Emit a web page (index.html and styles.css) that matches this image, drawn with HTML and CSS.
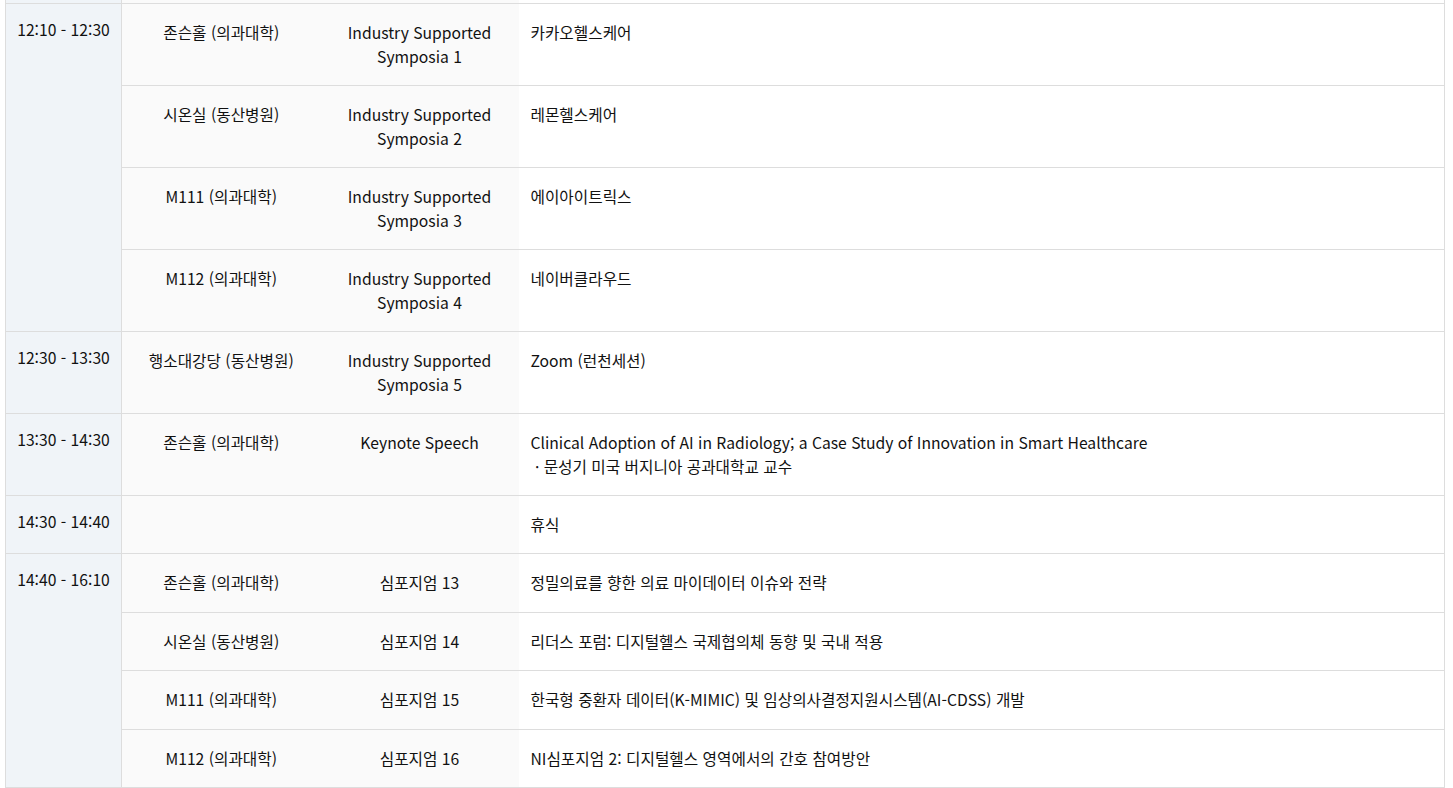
FILE: index.html
```html
<!DOCTYPE html>
<html lang="ko">
<head>
<meta charset="utf-8">
<link rel="stylesheet" href="styles.css">
</head>
<body>
<div class="wrap">
<table class="sched">
  <colgroup>
    <col class="c-time"><col class="c-room"><col class="c-sess"><col class="c-desc">
  </colgroup>
  <tbody>
    <tr class="filler"><td class="time"></td><td class="room"></td><td class="sess"></td><td class="desc"></td></tr>
    <tr>
      <td class="time" rowspan="4">12:10 - 12:30</td>
      <td class="room">존슨홀 (의과대학)</td>
      <td class="sess">Industry Supported<br>Symposia 1</td>
      <td class="desc">카카오헬스케어</td>
    </tr>
    <tr>
      <td class="room">시온실 (동산병원)</td>
      <td class="sess">Industry Supported<br>Symposia 2</td>
      <td class="desc">레몬헬스케어</td>
    </tr>
    <tr>
      <td class="room">M111 (의과대학)</td>
      <td class="sess">Industry Supported<br>Symposia 3</td>
      <td class="desc">에이아이트릭스</td>
    </tr>
    <tr>
      <td class="room">M112 (의과대학)</td>
      <td class="sess">Industry Supported<br>Symposia 4</td>
      <td class="desc">네이버클라우드</td>
    </tr>
    <tr>
      <td class="time">12:30 - 13:30</td>
      <td class="room">행소대강당 (동산병원)</td>
      <td class="sess">Industry Supported<br>Symposia 5</td>
      <td class="desc">Zoom (런천세션)</td>
    </tr>
    <tr>
      <td class="time">13:30 - 14:30</td>
      <td class="room">존슨홀 (의과대학)</td>
      <td class="sess">Keynote Speech</td>
      <td class="desc">Clinical Adoption of AI in Radiology; a Case Study of Innovation in Smart Healthcare<br>&nbsp;· 문성기 미국 버지니아 공과대학교 교수</td>
    </tr>
    <tr>
      <td class="time">14:30 - 14:40</td>
      <td class="room"></td>
      <td class="sess"></td>
      <td class="desc">휴식</td>
    </tr>
    <tr class="loose">
      <td class="time" rowspan="4">14:40 - 16:10</td>
      <td class="room">존슨홀 (의과대학)</td>
      <td class="sess">심포지엄 13</td>
      <td class="desc">정밀의료를 향한 의료 마이데이터 이슈와 전략</td>
    </tr>
    <tr class="loose">
      <td class="room">시온실 (동산병원)</td>
      <td class="sess">심포지엄 14</td>
      <td class="desc">리더스 포럼: 디지털헬스 국제협의체 동향 및 국내 적용</td>
    </tr>
    <tr class="loose">
      <td class="room">M111 (의과대학)</td>
      <td class="sess">심포지엄 15</td>
      <td class="desc">한국형 중환자 데이터(K-MIMIC) 및 임상의사결정지원시스템(AI-CDSS) 개발</td>
    </tr>
    <tr class="loose">
      <td class="room">M112 (의과대학)</td>
      <td class="sess">심포지엄 16</td>
      <td class="desc">NI심포지엄 2: 디지털헬스 영역에서의 간호 참여방안</td>
    </tr>
  </tbody>
</table>
</div>
</body>
</html>
```

FILE: styles.css
```css
html, body {
  margin: 0;
  padding: 0;
  background: #fff;
}
body {
  font-family: "Noto Sans CJK KR", "Noto Sans", sans-serif;
  font-size: 15.7px;
  color: #111;
}
.wrap {
  padding-left: 5px;
  width: 1440px;
}
.sched {
  width: 1440px;
  border-collapse: collapse;
  table-layout: fixed;
  border-left: 1px solid #ddd;
  border-right: 1px solid #ddd;
  border-bottom: 1px solid #ddd;
}
.c-time { width: 116px; }
.c-room { width: 199px; }
.c-sess { width: 198px; }
.c-desc { width: auto; }
.sched td {
  border-top: 1px solid #ddd;
  padding: 17px 12px 16px;
  line-height: 24px;
  vertical-align: top;
}
.sched tr.loose td {
  padding-bottom: 16.5px;
}
.sched td.time {
  background: #f0f4f8;
  text-align: center;
  border-right: 1px solid #ddd;
  padding: 14px 4px 16px;
  white-space: nowrap;
}
.sched td.room,
.sched td.sess {
  background: #fafafa;
  text-align: center;
}
.sched td.desc {
  background: #fff;
  text-align: left;
}
.sched tr.filler td {
  height: 3px;
  padding: 0;
  border-top: none;
  line-height: 0;
  font-size: 0;
}
```
